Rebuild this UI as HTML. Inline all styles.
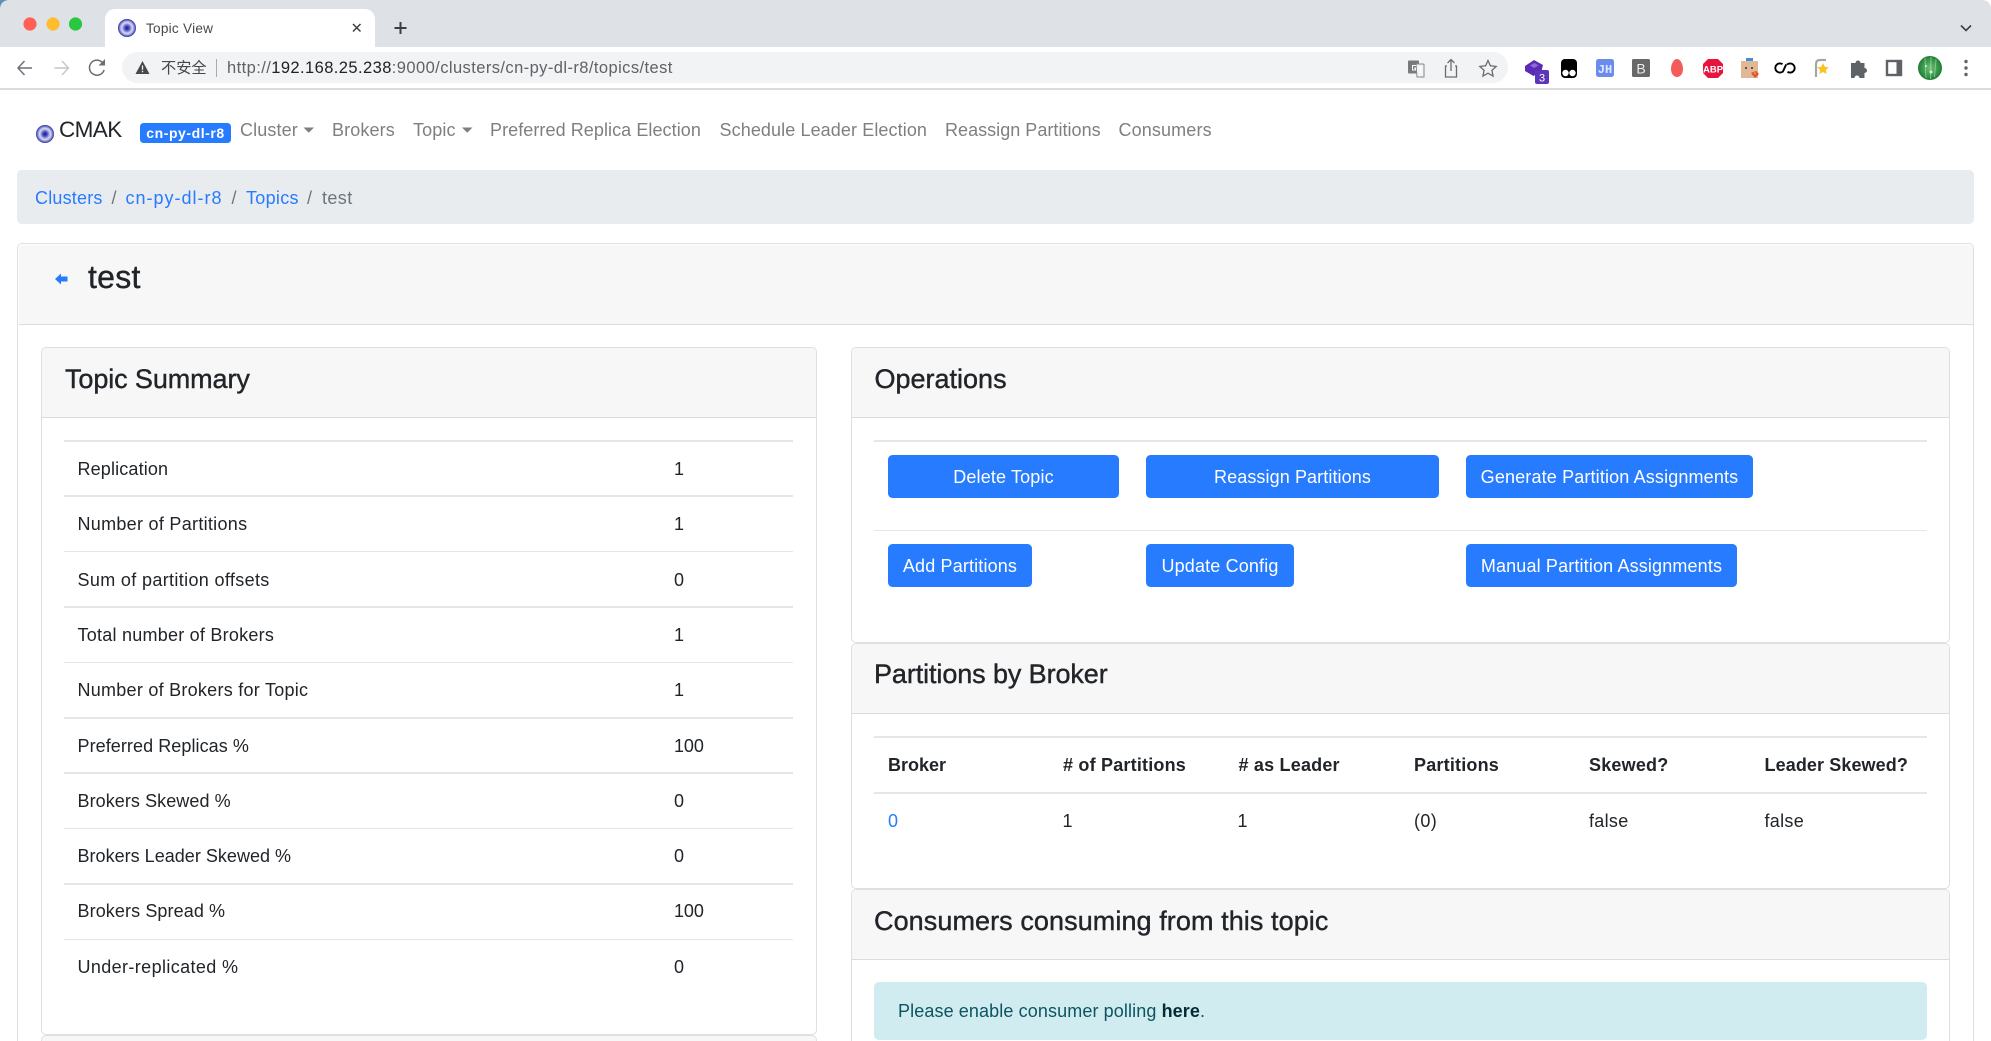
<!DOCTYPE html>
<html lang="en"><head><meta charset="utf-8"><title>Topic View</title>
<style>
html,body{margin:0;padding:0;background:#fff;width:1991px;height:1041px;overflow:hidden}
body{position:relative;font-family:"Liberation Sans","Noto Sans CJK SC",sans-serif;color:#212529;font-size:18px;filter:blur(.3px)}
.t{position:absolute;white-space:nowrap;line-height:24px;height:24px;margin-top:-12px}
.b{position:absolute;box-sizing:border-box}
.h{font-size:27px;line-height:32px;height:32px;margin-top:-16px;-webkit-text-stroke:.4px #212529;letter-spacing:-.1px}
.ln{position:absolute;height:1.5px;background:#e3e6ea}
.card{position:absolute;box-sizing:border-box;border:1.5px solid #dfdfdf;border-radius:5px;background:#fff;overflow:hidden}
.chd{position:absolute;left:0;right:0;top:0;background:#f7f7f7;border-bottom:1.5px solid #dcdcdc;box-sizing:border-box}
.btn{position:absolute;box-sizing:border-box;background:#277bff;color:#fff;border-radius:4.5px;text-align:center;height:43px;line-height:45px;font-size:18px;white-space:nowrap;letter-spacing:.15px}
.nav{color:#7f7f7f;letter-spacing:.13px}
.a{color:#277bff}
.th{font-weight:700;letter-spacing:.2px;font-size:18px}
svg{position:absolute;overflow:visible}
</style></head><body>

<!-- browser chrome -->
<div class="b" style="left:0;top:0;width:1991px;height:47px;background:#dee1e6"></div>
<div class="b" style="left:0;top:47px;width:1991px;height:41px;background:#fff"></div>
<div class="b" style="left:0;top:88px;width:1991px;height:1.5px;background:#dcdcdc"></div>
<div class="b" style="left:105px;top:9px;width:270px;height:38px;background:#fff;border-radius:10px 10px 0 0"></div>
<div class="b" style="left:122px;top:52px;width:1386px;height:31px;background:#f1f3f4;border-radius:16px"></div>
<div class="t" style="left:146px;top:28.500px;font-size:13.600px;color:#45494d;letter-spacing:.25px">Topic View</div>
<div class="t" style="left:161px;top:68.500px;font-size:15.200px;color:#45494d">不安全</div>
<div class="b" style="left:216px;top:59px;width:1px;height:18px;background:#a9acb0"></div>
<div class="t" style="left:227px;top:68px;font-size:16.500px;color:#5f6368;letter-spacing:.42px">http://<span style="color:#202124">192.168.25.238</span>:9000/clusters/cn-py-dl-r8/topics/test</div>

<svg style="left:0;top:0" width="1991" height="100" viewBox="0 0 1991 100">
<defs><radialGradient id="g"><stop offset="0" stop-color="#14148a"/><stop offset=".25" stop-color="#4b4fc0"/><stop offset=".6" stop-color="#d9dcf3"/><stop offset=".8" stop-color="#8a8fd6"/><stop offset="1" stop-color="#2a2aa0"/></radialGradient>
<radialGradient id="av" cx=".5" cy=".5" r=".55"><stop offset="0" stop-color="#6fc178"/><stop offset=".7" stop-color="#2f9142"/><stop offset="1" stop-color="#1f6f30"/></radialGradient></defs>
<path d="M0 0h8Q1 1 0 8z" fill="#5f8fb0"/><path d="M1991 0h-8q7 1 8 8z" fill="#fff"/>
<circle cx="30" cy="24" r="6.600" fill="#ff5f57"/><circle cx="53" cy="24" r="6.600" fill="#febc2e"/><circle cx="75.500" cy="24" r="6.600" fill="#28c840"/>
<circle cx="127" cy="28" r="9" fill="url(#g)"/>
<path d="M353 24l7.500 7.500M360.500 24l-7.500 7.500" stroke="#3c4043" stroke-width="1.500" fill="none"/>
<path d="M400.500 22v12M394.500 28h12" stroke="#3c4043" stroke-width="2" fill="none"/>
<path d="M1961 25.500l5 5 5-5" stroke="#3c4043" stroke-width="1.600" fill="none"/>
<path d="M32 68H18M24.500 61L18 68l6.500 7" stroke="#6a6e73" stroke-width="1.400" fill="none"/>
<path d="M54.500 68h14M62 61l6.500 7-6.500 7" stroke="#c4c7cb" stroke-width="1.400" fill="none"/>
<path d="M103.500 64a7.500 7.500 0 1 0 .6 6" stroke="#6a6e73" stroke-width="1.500" fill="none"/><path d="M105 59v6.500h-6.500z" fill="#6a6e73"/>
<path d="M142.500 61l7 13h-14z" fill="#45494d"/><path d="M142.500 65.500v4.300M142.500 70.800v1.400" stroke="#f1f3f4" stroke-width="1.300"/>
<!-- translate -->
<rect x="1408" y="60.500" width="11" height="13" rx="1" fill="#77797d"/><path d="M1416 64h7a1 1 0 0 1 1 1v12h-7z" fill="#f1f3f4" stroke="#85878b" stroke-width="1"/>
<path d="M1416 65.500h-3.500v4.500h3v-2h-1.500M1419 68h3M1420.500 68v5" stroke="#fff" stroke-width="1" fill="none"/>
<!-- share -->
<path d="M1447 66h-1.500v11h11V66H1455M1451 71V60M1447.500 63l3.500-3.500 3.500 3.500" stroke="#6a6e73" stroke-width="1.300" fill="none"/>
<!-- star -->
<path d="M1488 60.500l2.400 5.300 5.800.7-4.300 3.900 1.200 5.700-5.100-2.900-5.100 2.900 1.200-5.700-4.300-3.900 5.800-.7z" stroke="#6a6e73" stroke-width="1.300" fill="none"/>
<!-- cube + badge -->
<path d="M1525 66l9-6 9 5-1.500 6-8 5-8.500-5z" fill="#5b2bb5"/><path d="M1530 65.500l4.500-2.500 4 2.500-4.500 2.500z" fill="#8e6bd6"/>
<rect x="1535" y="70" width="14" height="14" rx="2" fill="#5c35b8"/>
<text x="1542" y="81.500" text-anchor="middle" font-family="Liberation Sans" font-size="11" fill="#fff">3</text>
<!-- tampermonkey -->
<rect x="1561" y="59" width="16" height="19" rx="4" fill="#000"/><circle cx="1565.500" cy="73" r="3.200" fill="#fff"/><circle cx="1572.500" cy="73" r="3.200" fill="#fff"/>
<!-- JH -->
<rect x="1596" y="59" width="18" height="18" rx="2.500" fill="#6a8cec"/>
<text x="1605" y="73" text-anchor="middle" font-family="Liberation Mono" font-weight="700" font-size="12" fill="#dfe8ff">JH</text>
<!-- B -->
<rect x="1632" y="59" width="18" height="18" rx="1.500" fill="#696969"/>
<text x="1641" y="73.500" text-anchor="middle" font-family="Liberation Sans" font-size="14" fill="#eee">B</text>
<!-- egg -->
<path d="M1677 59c3.500 0 6 5.500 6 10s-2.600 8-6 8-6-3.500-6-8 2.500-10 6-10z" fill="#f45b5b"/>
<!-- ABP -->
<path d="M1708 59h10l5 5v9l-5 5h-10l-5-5v-9z" fill="#e8133f"/>
<text x="1713" y="72.500" text-anchor="middle" font-family="Liberation Sans" font-weight="700" font-size="9.500" fill="#fff">ABP</text>
<!-- box -->
<rect x="1741" y="61" width="17" height="17" fill="#e0b896"/><rect x="1746" y="58" width="7" height="3" fill="#3d8fe0"/>
<circle cx="1746" cy="68" r="1" fill="#333"/><circle cx="1752" cy="68" r="1" fill="#333"/><path d="M1751 73l5-2 3 3-4 4z" fill="#e2502e"/><path d="M1754 72l2 1-1 2z" fill="#f5c542"/>
<!-- loops -->
<path d="M1782.500 64.200a4.600 4.600 0 1 0 .5 7.200l3.200-7M1787.500 71.800a4.600 4.600 0 1 0-.5-7.200" stroke="#000" stroke-width="1.900" fill="none"/>
<!-- doc star -->
<path d="M1826 60h-6q-4 0-4 4v13" stroke="#a5a5a5" stroke-width="2.200" fill="none"/>
<path d="M1823 63l1.800 3.700 4 .5-3 2.800.8 4-3.600-2-3.600 2 .8-4-3-2.800 4-.5z" fill="#f7c325"/>
<!-- puzzle -->
<path d="M1851 63h4.500a2.500 2.500 0 0 1 5 0h4v5a2.500 2.500 0 0 1 0 5v5h-5a2.500 2.500 0 0 0-5 0h-3.500z" fill="#5f6368"/>
<!-- panel -->
<rect x="1887" y="61" width="14" height="14" fill="#fff" stroke="#5f6368" stroke-width="2.400"/><rect x="1896.500" y="61" width="4.500" height="14" fill="#5f6368"/>
<!-- avatar -->
<circle cx="1930" cy="68" r="12" fill="url(#av)"/><path d="M1925 58l1 20M1931 57l-.5 22M1936 59l-1.500 18" stroke="#b5e4b8" stroke-width="1" opacity=".6"/><circle cx="1931" cy="72" r="1.500" fill="#d9f2db"/><circle cx="1926" cy="66" r="1" fill="#d9f2db"/>
<!-- menu -->
<circle cx="1966" cy="61.500" r="1.700" fill="#5f6368"/><circle cx="1966" cy="68" r="1.700" fill="#5f6368"/><circle cx="1966" cy="74.500" r="1.700" fill="#5f6368"/>
<!-- cmak logo -->
<circle cx="45" cy="134" r="9" fill="url(#g)"/>
<!-- carets -->
<path d="M303.500 127.500h10.500l-5.250 5.200z" fill="#7f7f7f"/>
<path d="M462 127.500h10.500l-5.250 5.200z" fill="#7f7f7f"/>
</svg>

<!-- navbar -->
<div class="t" style="left:59px;top:130px;font-size:22.500px;letter-spacing:-.6px">CMAK</div>
<div class="b" style="left:140px;top:123px;width:91px;height:20px;background:#277bff;border-radius:3.500px"></div>
<div class="t" style="left:140px;width:91px;text-align:center;top:133px;color:#fff;font-weight:700;font-size:14px;letter-spacing:.55px">cn-py-dl-r8</div>
<div class="t nav" style="left:240px;top:130px">Cluster</div>
<div class="t nav" style="left:332px;top:130px">Brokers</div>
<div class="t nav" style="left:413px;top:130px">Topic</div>
<div class="t nav" style="left:490px;top:130px;letter-spacing:.07px">Preferred Replica Election</div>
<div class="t nav" style="left:719.500px;top:130px;letter-spacing:.1px">Schedule Leader Election</div>
<div class="t nav" style="left:945px;top:130px;letter-spacing:.03px">Reassign Partitions</div>
<div class="t nav" style="left:1118.500px;top:130px">Consumers</div>

<!-- breadcrumb -->
<div class="b" style="left:17px;top:170px;width:1957px;height:54px;background:#e9ecef;border-radius:4.500px"></div>
<div class="t a" style="left:35px;top:198px;letter-spacing:.2px">Clusters</div>
<div class="t" style="left:111.500px;top:198px;color:#6c757d">/</div>
<div class="t a" style="left:125.500px;top:198px;letter-spacing:1px">cn-py-dl-r8</div>
<div class="t" style="left:231.500px;top:198px;color:#6c757d">/</div>
<div class="t a" style="left:246px;top:198px;letter-spacing:.3px">Topics</div>
<div class="t" style="left:307px;top:198px;color:#6c757d">/</div>
<div class="t" style="left:322px;top:198px;color:#6c757d;letter-spacing:.4px">test</div>

<!-- outer card -->
<div class="b" style="left:17px;top:243px;width:1957px;height:820px;border:1.500px solid #dfdfdf;border-radius:5px 5px 0 0;background:#fff"></div>
<div class="b" style="left:18.500px;top:244.500px;width:1954px;height:80px;background:#f7f7f7;border-bottom:1.500px solid #dcdcdc;border-radius:4px 4px 0 0"></div>
<svg style="left:55px;top:273px" width="13" height="12" viewBox="0 0 13 12"><path d="M0 6l6-5.500V3.500h6.500v5H6v3z" fill="#277bff"/></svg>
<div class="t h" style="left:88px;top:277px;font-size:32px;letter-spacing:.25px">test</div>

<!-- left card -->
<div class="card" style="left:41px;top:347px;width:776px;height:688px">
  <div class="chd" style="height:70px"></div>
</div>
<div class="t h" style="left:65px;top:379px">Topic Summary</div>
<div class="ln" style="left:64px;width:729px;top:440px"></div>
<div class="ln" style="left:64px;width:729px;top:495.400px"></div>
<div class="ln" style="left:64px;width:729px;top:550.800px"></div>
<div class="ln" style="left:64px;width:729px;top:606.200px"></div>
<div class="ln" style="left:64px;width:729px;top:661.600px"></div>
<div class="ln" style="left:64px;width:729px;top:717px"></div>
<div class="ln" style="left:64px;width:729px;top:772.400px"></div>
<div class="ln" style="left:64px;width:729px;top:827.800px"></div>
<div class="ln" style="left:64px;width:729px;top:883.200px"></div>
<div class="ln" style="left:64px;width:729px;top:938.600px"></div>
<div class="t" style="left:77.500px;top:469px;letter-spacing:.15px">Replication</div><div class="t" style="left:674px;top:469px">1</div>
<div class="t" style="left:77.500px;top:524px;letter-spacing:.29px">Number of Partitions</div><div class="t" style="left:674px;top:524px">1</div>
<div class="t" style="left:77.500px;top:580px;letter-spacing:.35px">Sum of partition offsets</div><div class="t" style="left:674px;top:580px">0</div>
<div class="t" style="left:77.500px;top:635px;letter-spacing:.24px">Total number of Brokers</div><div class="t" style="left:674px;top:635px">1</div>
<div class="t" style="left:77.500px;top:690px;letter-spacing:.26px">Number of Brokers for Topic</div><div class="t" style="left:674px;top:690px">1</div>
<div class="t" style="left:77.500px;top:745.500px;letter-spacing:.07px">Preferred Replicas %</div><div class="t" style="left:674px;top:745.500px;letter-spacing:-.1px">100</div>
<div class="t" style="left:77.500px;top:801px;letter-spacing:.07px">Brokers Skewed %</div><div class="t" style="left:674px;top:801px">0</div>
<div class="t" style="left:77.500px;top:856px;letter-spacing:.02px">Brokers Leader Skewed %</div><div class="t" style="left:674px;top:856px">0</div>
<div class="t" style="left:77.500px;top:911px;letter-spacing:.1px">Brokers Spread %</div><div class="t" style="left:674px;top:911px;letter-spacing:-.1px">100</div>
<div class="t" style="left:77.500px;top:967px;letter-spacing:.38px">Under-replicated %</div><div class="t" style="left:674px;top:967px">0</div>

<div class="card" style="left:41px;top:1035px;width:776px;height:40px;background:#f7f7f7"></div>

<!-- operations -->
<div class="card" style="left:851px;top:347px;width:1099px;height:295.500px">
  <div class="chd" style="height:70px"></div>
</div>
<div class="t h" style="left:874.500px;top:379px;letter-spacing:0">Operations</div>
<div class="ln" style="left:874px;width:1053px;top:440px"></div>
<div class="ln" style="left:874px;width:1053px;top:529.500px"></div>
<div class="btn" style="left:888px;top:455px;width:231px">Delete Topic</div>
<div class="btn" style="left:1146px;top:455px;width:293px;letter-spacing:.1px">Reassign Partitions</div>
<div class="btn" style="left:1466px;top:455px;width:287px">Generate Partition Assignments</div>
<div class="btn" style="left:888px;top:544px;width:144px">Add Partitions</div>
<div class="btn" style="left:1146px;top:544px;width:148px">Update Config</div>
<div class="btn" style="left:1466px;top:544px;width:271px">Manual Partition Assignments</div>

<!-- partitions by broker -->
<div class="card" style="left:851px;top:642.500px;width:1099px;height:246px">
  <div class="chd" style="height:70px"></div>
</div>
<div class="t h" style="left:874px;top:673.500px">Partitions by Broker</div>
<div class="ln" style="left:874px;width:1053px;top:736px"></div>
<div class="ln" style="left:874px;width:1053px;top:791.500px;height:2.500px"></div>
<div class="t th" style="left:888px;top:765px;letter-spacing:0">Broker</div>
<div class="t th" style="left:1063px;top:765px"># of Partitions</div>
<div class="t th" style="left:1238.500px;top:765px"># as Leader</div>
<div class="t th" style="left:1414px;top:765px">Partitions</div>
<div class="t th" style="left:1589px;top:765px">Skewed?</div>
<div class="t th" style="left:1764.500px;top:765px;letter-spacing:.1px">Leader Skewed?</div>
<div class="t a" style="left:888px;top:821px">0</div>
<div class="t" style="left:1062.500px;top:821px">1</div>
<div class="t" style="left:1237.500px;top:821px">1</div>
<div class="t" style="left:1414px;top:821px;letter-spacing:.4px">(0)</div>
<div class="t" style="left:1589px;top:821px;letter-spacing:.3px">false</div>
<div class="t" style="left:1764.500px;top:821px;letter-spacing:.3px">false</div>

<!-- consumers -->
<div class="card" style="left:851px;top:889px;width:1099px;height:200px">
  <div class="chd" style="height:70px"></div>
</div>
<div class="t h" style="left:874px;top:921px;letter-spacing:.08px">Consumers consuming from this topic</div>
<div class="b" style="left:874px;top:982px;width:1053px;height:58px;background:#d1ecf1;border-radius:5px"></div>
<div class="t" style="left:898px;top:1011px;color:#0c5460;letter-spacing:.11px">Please enable consumer polling <b style="color:#062c33">here</b>.</div>
</body></html>
